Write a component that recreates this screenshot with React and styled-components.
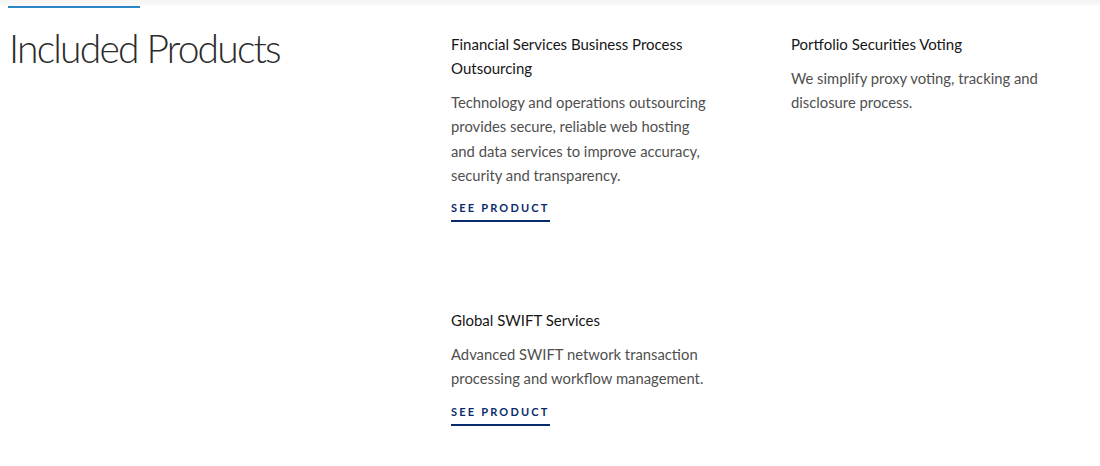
import React from 'react';
import styled, { createGlobalStyle } from 'styled-components';

const GlobalStyle = createGlobalStyle`
  body {
    margin: 0;
    background: #ffffff;
    font-family: Lato, "Liberation Sans", sans-serif;
  }
`;

const Page = styled.div`
  width: 1100px;
  height: 466px;
  overflow: hidden;
  background: #fff;
`;

const TopStrip = styled.div`
  height: 6px;
  background: linear-gradient(#f4f4f4, #fbfbfb);
  position: relative;
`;

const Accent = styled.div`
  position: absolute;
  left: 8px;
  bottom: -2px;
  width: 132px;
  height: 2px;
  background: #2b86c5;
`;

const Section = styled.section`
  display: grid;
  grid-template-columns: 442px 340px 1fr;
  padding: 18px 0 0 9px;
  row-gap: 78px;
`;

const Heading = styled.h2`
  margin: 0;
  font-family: Lato, "Liberation Sans", sans-serif;
  font-weight: 300;
  font-size: 39px;
  letter-spacing: -1.8px;
  line-height: 48px;
  color: #2b2b2b;
  grid-row: 1;
  grid-column: 1;
`;

const Card = styled.div`
  grid-column: ${(p) => p.col};
  grid-row: ${(p) => p.row};
  max-width: 262px;
  padding-top: 8px;
`;

const Title = styled.h3`
  margin: 0 0 10px;
  font-size: 15px;
  font-weight: 400;
  line-height: 24px;
  color: #161616;
`;

const Body = styled.p`
  margin: 0;
  font-size: 14.8px;
  line-height: 24.3px;
  color: #4f4f4f;
`;

const Link = styled.a`
  display: inline-block;
  margin-top: 14px;
  padding-bottom: 5px;
  border-bottom: 2px solid #0a2b6b;
  color: #0a2b6b;
  font-size: 11px;
  font-weight: 700;
  letter-spacing: 2.2px;
  text-decoration: none;
  line-height: 14px;
`;

const products = [
  {
    title: 'Financial Services Business Process Outsourcing',
    body: 'Technology and operations outsourcing provides secure, reliable web hosting and data services to improve accuracy, security and transparency.',
    link: true,
    col: 2,
    row: 1,
  },
  {
    title: 'Portfolio Securities Voting',
    body: 'We simplify proxy voting, tracking and disclosure process.',
    link: false,
    col: 3,
    row: 1,
  },
  {
    title: 'Global SWIFT Services',
    body: 'Advanced SWIFT network transaction processing and workflow management.',
    link: true,
    col: 2,
    row: 2,
  },
];

export default function App() {
  return (
    <Page>
      <GlobalStyle />
      <TopStrip>
        <Accent />
      </TopStrip>
      <Section>
        <Heading>Included Products</Heading>
        {products.map((p) => (
          <Card key={p.title} col={p.col} row={p.row}>
            <Title>{p.title}</Title>
            <Body>{p.body}</Body>
            {p.link && <Link href="#">SEE PRODUCT</Link>}
          </Card>
        ))}
      </Section>
    </Page>
  );
}
